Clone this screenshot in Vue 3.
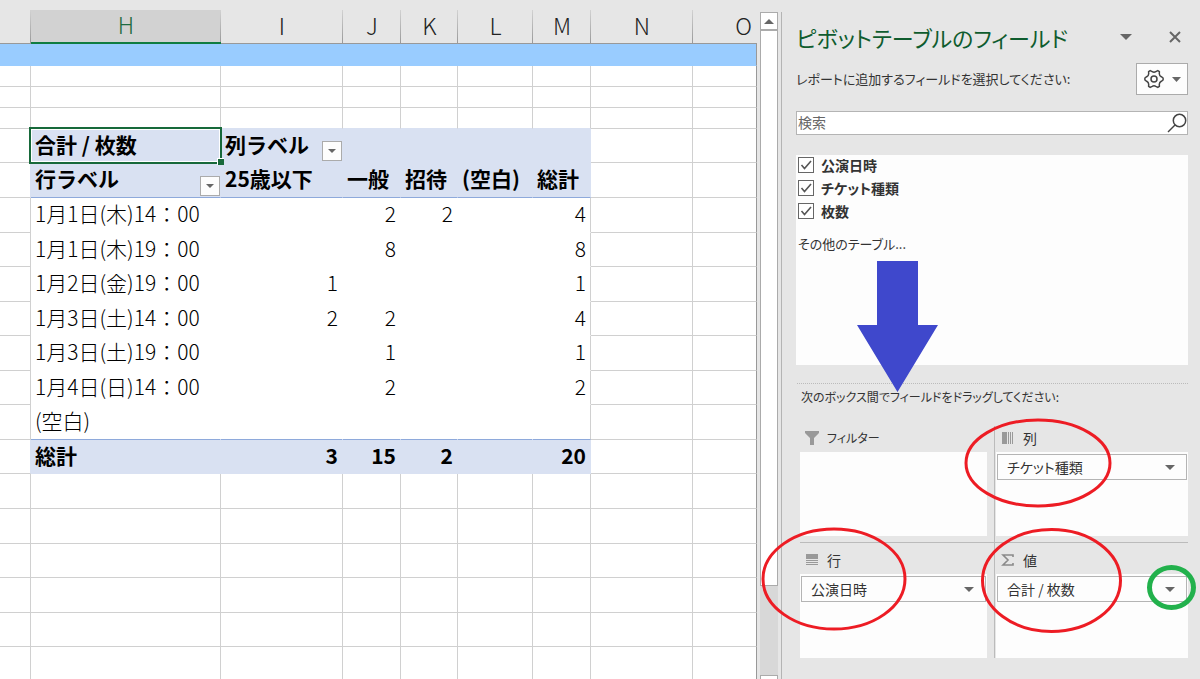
<script setup>
import { ref } from 'vue'

const columns = ['H', 'I', 'J', 'K', 'L', 'M', 'N', 'O']

const pivotRows = [
  { label: '1月1日(木)14：00', values: ['', '2', '2', '', '4'], height: 35 },
  { label: '1月1日(木)19：00', values: ['', '8', '', '', '8'], height: 34 },
  { label: '1月2日(金)19：00', values: ['1', '', '', '', '1'], height: 35 },
  { label: '1月3日(土)14：00', values: ['2', '2', '', '', '4'], height: 34 },
  { label: '1月3日(土)19：00', values: ['', '1', '', '', '1'], height: 35 },
  { label: '1月4日(日)14：00', values: ['', '2', '', '', '2'], height: 34 },
  { label: '(空白)', values: ['', '', '', '', ''], height: 35 },
]
const totals = ['3', '15', '2', '', '20']
const emptyRows = [35, 35, 34, 35, 34, 35]

const fields = ref([
  { id: 'f1', name: '公演日時', on: true },
  { id: 'f2', name: 'チケット種類', on: true },
  { id: 'f3', name: '枚数', on: true },
])
const query = ref('')

const areas = [
  { key: 'filter', title: 'フィルター', item: '' },
  { key: 'column', title: '列', item: 'チケット種類' },
  { key: 'row', title: '行', item: '公演日時' },
  { key: 'value', title: '値', item: '合計 / 枚数' },
]
</script>

<template>
  <div class="app">
    <main class="sheet">
      <table>
        <colgroup>
          <col class="w-g" /><col class="w-h" /><col class="w-i" /><col class="w-j" /><col class="w-k" />
          <col class="w-l" /><col class="w-m" /><col class="w-n" /><col />
        </colgroup>
        <thead>
          <tr>
            <th></th>
            <th v-for="c in columns" :key="c" scope="col" :class="{ active: c === 'H', last: c === 'O' }">{{ c }}</th>
          </tr>
        </thead>
        <tbody>
          <tr class="band"><td v-for="n in 9" :key="n"></td></tr>
          <tr v-for="r in 3" :key="'s' + r" class="small" :class="{ above: r === 3 }">
            <td v-for="n in 9" :key="n"></td>
          </tr>
          <tr class="head first">
            <td></td>
            <th class="selected">合計 / 枚数<span class="cursor"></span></th>
            <th class="with-filter">列ラベル
              <button class="filter" aria-label="列ラベルのフィルター"><svg width="8" height="4" viewBox="0 0 8 4"><path d="M0 0h8L4 4z" /></svg></button>
            </th>
            <th></th><th></th><th></th><th></th><td></td><td></td>
          </tr>
          <tr class="head second">
            <td></td>
            <th class="with-filter">行ラベル
              <button class="filter" aria-label="行ラベルのフィルター"><svg width="8" height="4" viewBox="0 0 8 4"><path d="M0 0h8L4 4z" /></svg></button>
            </th>
            <th>25歳以下</th><th>一般</th><th>招待</th><th>(空白)</th><th>総計</th><td></td><td></td>
          </tr>
          <tr v-for="row in pivotRows" :key="row.label" class="data" :style="{ height: row.height + 'px' }">
            <td></td>
            <td>{{ row.label }}</td>
            <td v-for="(v, i) in row.values" :key="i" class="num">{{ v }}</td>
            <td></td><td></td>
          </tr>
          <tr class="head total">
            <td></td>
            <th>総計</th>
            <th v-for="(v, i) in totals" :key="i" class="num">{{ v }}</th>
            <td></td><td></td>
          </tr>
          <tr v-for="(h, r) in emptyRows" :key="'e' + r" :style="{ height: h + 'px' }">
            <td v-for="n in 9" :key="n"></td>
          </tr>
        </tbody>
      </table>
    </main>

    <div class="scrollbar">
      <button class="arrow" aria-label="上へ"><svg width="10" height="5" viewBox="0 0 10 5"><path d="M0 5h10L5 0z" /></svg></button>
      <div class="thumb"></div>
      <div class="track"></div>
      <div class="end"></div>
    </div>

    <aside class="pane">
      <header class="title-row">
        <h1>ピボットテーブルのフィールド</h1>
        <button class="plain" aria-label="オプション"><svg width="12" height="6" viewBox="0 0 12 6"><path d="M0 0h12L6 6z" fill="#666" /></svg></button>
        <button class="plain" aria-label="閉じる"><svg width="12" height="12" viewBox="0 0 12 12"><path d="M1 1l10 10M11 1L1 11" stroke="#666" stroke-width="2" fill="none" /></svg></button>
      </header>

      <div class="intro">
        <p>レポートに追加するフィールドを選択してください:</p>
        <button class="gear" aria-label="ツール">
          <svg width="20" height="20" viewBox="0 0 20 20" fill="none" stroke="#444" stroke-width="1.5" stroke-linejoin="round">
            <path d="M6.2 1.6L8.2 2.7Q10 3.9 11.8 2.7L13.8 1.6L15.4 2.6L15.3 4.7Q15.4 6.8 17.3 7.7L19.1 9V11L17.3 12.3Q15.4 13.2 15.3 15.3L15.4 17.4L13.8 18.4L11.8 17.3Q10 16.1 8.2 17.3L6.2 18.4L4.6 17.4L4.7 15.3Q4.6 13.2 2.7 12.3L.9 11V9L2.7 7.7Q4.6 6.8 4.7 4.7L4.6 2.6z" />
            <circle cx="10" cy="10" r="3" />
          </svg>
          <svg width="9" height="5" viewBox="0 0 9 5"><path d="M0 0h9L4.5 5z" fill="#666" /></svg>
        </button>
      </div>

      <div class="search">
        <input v-model="query" type="text" placeholder="検索" aria-label="検索" />
        <svg width="20" height="20" viewBox="0 0 20 20" fill="none" stroke="#444" stroke-width="1.5">
          <circle cx="12.5" cy="7.5" r="6.2" /><path d="M8 12L1 19" />
        </svg>
      </div>

      <section class="fields">
        <div v-for="f in fields" :key="f.id" class="field">
          <input :id="f.id" v-model="f.on" type="checkbox" />
          <svg v-if="f.on" class="tick" width="16" height="16" viewBox="0 0 16 16"><path d="M3.500 8l3 3.500L13 4" fill="none" stroke="#555" stroke-width="1.6" /></svg>
          <label :for="f.id">{{ f.name }}</label>
        </div>
        <a href="#">その他のテーブル...</a>
      </section>

      <p class="drag">次のボックス間でフィールドをドラッグしてください:</p>

      <div class="areas">
        <section v-for="a in areas" :key="a.key" class="area" :class="'area-' + a.key">
          <h2>
            <svg v-if="a.key === 'filter'" width="14" height="14" viewBox="0 0 14 14"><path d="M0 0h14v2L9 7v7H5V7L0 2z" fill="#999" /></svg>
            <svg v-else-if="a.key === 'column'" width="14" height="14" viewBox="0 0 14 14"><path d="M1 1h5v12H1zM7 1h1v12H7zM9 1h1v12H9zM11 1h1v12h-1z" fill="#999" /></svg>
            <svg v-else-if="a.key === 'row'" width="14" height="14" viewBox="0 0 14 14"><path d="M1 1h12v5H1zM1 7h12v1H1zM1 9h12v1H1zM1 11h12v1H1z" fill="#999" /></svg>
            <svg v-else width="14" height="14" viewBox="0 0 14 14"><path d="M12 4V2H2l5 5-5 5h10v-2" fill="none" stroke="#8a8a8a" stroke-width="1.6" /></svg>
            {{ a.title }}
          </h2>
          <div class="box">
            <button v-if="a.item" class="item">
              <span>{{ a.item }}</span>
              <svg width="10" height="5" viewBox="0 0 10 5"><path d="M0 0h10L5 5z" fill="#666" /></svg>
            </button>
          </div>
        </section>
      </div>

      <svg class="marks" width="419" height="679" viewBox="781 0 419 679" fill="none" aria-hidden="true">
        <path d="M877 261h41v64h20L897.500 392L857 325h20z" fill="#3f48cc" />
        <g stroke="#ed1c24" stroke-width="3">
          <ellipse cx="1038" cy="463" rx="72" ry="43" />
          <ellipse cx="834" cy="579" rx="71" ry="50" />
          <ellipse cx="1051.500" cy="580.500" rx="69" ry="51" />
        </g>
        <ellipse cx="1171.500" cy="587.500" rx="22" ry="20" stroke="#22b14c" stroke-width="5" />
      </svg>
    </aside>
  </div>
</template>

<style>
body { margin: 0; background: #e6e6e6; }
</style>

<style scoped>
* { box-sizing: border-box; }
.app {
  display: flex;
  height: 100vh;
  overflow: hidden;
  background: #e6e6e6;
  color: #000;
  font-family: "Noto Sans CJK JP", "Noto Sans", sans-serif;
}
button { font: inherit; color: inherit; padding: 0; margin: 0; border-radius: 0; cursor: pointer; }
svg { display: block; flex: none; }

.sheet { flex: 1; min-width: 0; padding-top: 10px; overflow: hidden; }
table { width: 100%; table-layout: fixed; border-collapse: separate; border-spacing: 0; font-size: 21px; line-height: 24px; }
.w-g { width: 31px; }
.w-h { width: 190px; }
.w-i { width: 122px; }
.w-j, .w-m { width: 58px; }
.w-k { width: 57px; }
.w-l { width: 75px; }
.w-n { width: 102px; }
thead tr { height: 34px; }
thead th {
  padding: 0 0 4px;
  font-size: 23px;
  font-weight: 300;
  color: #222;
  border-bottom: 1px solid #999;
  background: linear-gradient(#d2d2d2, #999) right / 1px 100% no-repeat;
}
thead th.active { color: #1e6b41; background-color: #d2d2d2; border-bottom: 2px solid #107c41; }
thead th.last { text-align: right; padding-right: 5px; background: none; }

tbody td, tbody th {
  padding: 0 4px;
  text-align: left;
  white-space: nowrap;
  background: #fff;
  border-right: 1px solid #d0d0d0;
  border-bottom: 1px solid #d0d0d0;
}
tbody td { font-weight: 300; }
.head th, .data td { padding-bottom: 4px; }
tbody td:last-child { border-right-color: #999; }
.band { height: 22px; }
.band td { background: #99ccff; border-color: #99ccff; }
.small { height: 21px; }
tbody .num { text-align: right; }
.above td:nth-child(n + 2):nth-child(-n + 7) { border-bottom-color: #d9e1f2; }
.head th { background: #d9e1f2; border-color: #d9e1f2; font-weight: 700; }
.head td:first-child { border-right-color: #d9e1f2; }
.first { height: 34px; }
.second { height: 35px; }
.second th { border-bottom-color: #8ea9db; }
.total { height: 34px; }
.data td:nth-child(n + 2):nth-child(-n + 7) { border-bottom-color: #fff; }
.data td:nth-child(n + 2):nth-child(-n + 6) { border-right-color: #fff; }
.data:has(+ .total) td:nth-child(n + 2):nth-child(-n + 7) { border-bottom-color: #8ea9db; }
.selected, .with-filter { position: relative; }
.selected { z-index: 1; }
.cursor { position: absolute; inset: -2px; border: 2px solid #17693a; box-shadow: inset 0 0 0 1px #fff; }
.cursor::after { content: ""; position: absolute; right: -4px; bottom: -3px; width: 6px; height: 6px; background: #17693a; border: 1px solid #fff; border-width: 1px 0 0 1px; }
.filter {
  position: absolute;
  right: 0;
  bottom: 1px;
  display: grid;
  place-items: center;
  width: 20px;
  height: 20px;
  background: #fdfdfd;
  border: 1px solid #ababab;
  fill: #666;
}

.scrollbar { display: flex; flex-direction: column; width: 24px; padding: 12px 3px 0; }
.arrow { display: grid; place-items: center; height: 18px; background: #fff; border: 1px solid #ababab; fill: #666; }
.thumb { flex: 557; background: #fff; border: 1px solid #ababab; }
.track { flex: 89; background: #d8d8d8; }
.end { flex: 3; background: #fff; border: 1px solid #ababab; border-bottom: 0; }

.pane {
  position: relative;
  width: 419px;
  margin-top: 12px;
  padding: 8px 12px 0 14px;
  border-left: 1px solid #b4b4b4;
  color: #333;
  font-size: 14px;
  line-height: 20px;
  font-feature-settings: "palt";
}
.title-row { display: flex; align-items: center; height: 34px; gap: 37px; padding-right: 7px; }
h1 { flex: 1; min-width: 0; margin: 0; font-size: 22px; line-height: 34px; font-weight: 400; color: #0f5c2e; white-space: nowrap; }
.plain { border: 0; background: none; }
.intro { display: flex; align-items: center; justify-content: space-between; height: 32px; margin-top: 9px; font-size: 13px; }
p { margin: 0; white-space: nowrap; }
.gear { display: flex; align-items: center; justify-content: center; gap: 8px; width: 52px; height: 32px; background: #fdfdfd; border: 1px solid #ababab; }
.search { display: flex; align-items: center; height: 24px; margin-top: 16px; background: #fff; border: 1px solid #b4b4b4; }
.search input { flex: 1; min-width: 0; height: 20px; padding: 0 1px 2px; border: 0; outline: 0; background: none; font: inherit; color: #333; }
.search input::placeholder { color: #666; opacity: 1; }
.fields { display: flex; flex-direction: column; gap: 3px; height: 210px; margin-top: 20px; padding-left: 2px; background: #fdfdfd; }
.field { position: relative; display: flex; align-items: center; gap: 7px; height: 20px; font-weight: 700; }
.field input { appearance: none; width: 16px; height: 16px; margin: 0; background: #fff; border: 1px solid #666; }
.tick { position: absolute; left: 0; pointer-events: none; }
.fields a { margin-top: 10px; font-size: 13px; color: #333; text-decoration: none; }
.drag { margin: 18px 0 0 1px; padding: 3px 0 0 4px; border-top: 1px dotted #bbb; font-size: 12px; }
.areas { display: grid; grid-template-columns: 195px 1fr; margin: 19px 0 0 4px; }
.area { min-width: 0; }
.area h2 { display: flex; align-items: center; gap: 8px; height: 26px; margin: 0; padding: 0 0 3px 5px; font-size: 14px; font-weight: 400; }
.area-filter h2 { font-size: 12px; }
.box { height: 84px; padding: 2px 1px; background: #fdfdfd; }
.area-filter, .area-row { padding-right: 7px; border-right: 1px solid #bbb; }
.area-filter, .area-column { padding-bottom: 6px; border-bottom: 1px solid #bbb; }
.area-row, .area-value { padding-top: 5px; }
.area-column, .area-value { padding-left: 1px; }
.item { display: flex; align-items: center; justify-content: space-between; width: 100%; height: 26px; padding: 0 11px 0 9px; background: #fdfdfd; border: 1px solid #b4b4b4; font-feature-settings: "palt"; }
.marks { position: absolute; left: -1px; top: -12px; overflow: visible; pointer-events: none; }
</style>
